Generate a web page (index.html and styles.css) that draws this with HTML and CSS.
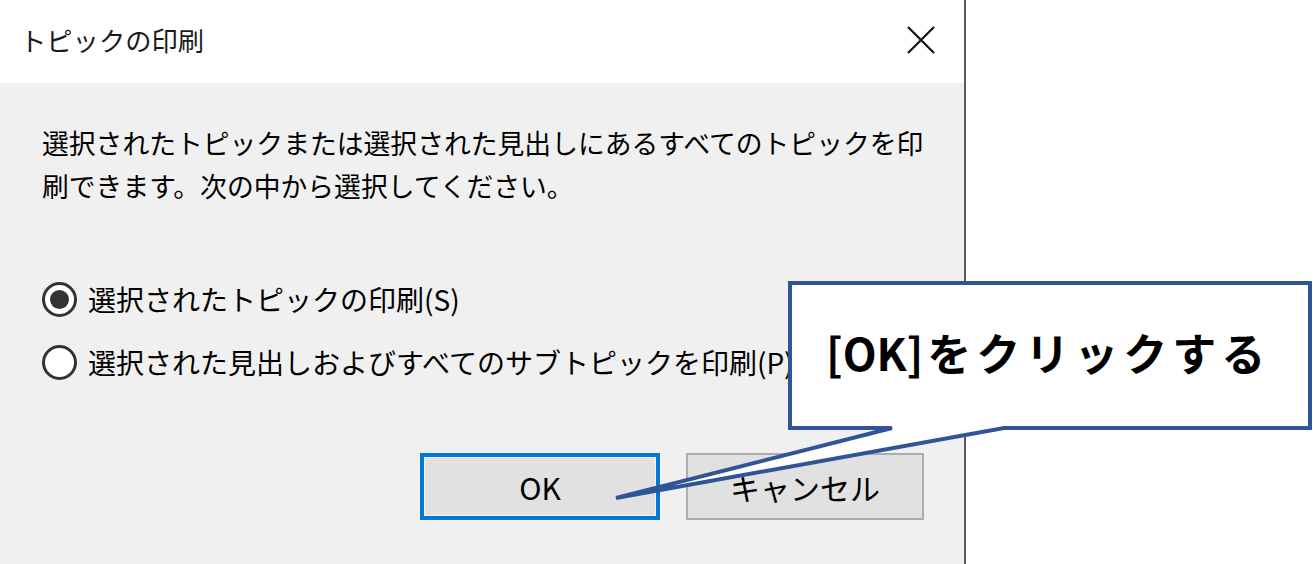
FILE: index.html
```html
<!DOCTYPE html>
<html lang="ja">

<head>
    <meta charset="UTF-8">
    <meta name="viewport" content="width=device-width, initial-scale=1.0">
    <title>トピックの印刷</title>

    <link rel="stylesheet" href="styles.css">
</head>

<body>
    <div class="page">
        <div class="dialog">
            <div class="titlebar">
                <span class="title">トピックの印刷</span>
                <svg class="close" width="30" height="30" viewBox="0 0 30 30">
                    <path d="M2 2 L28 28 M28 2 L2 28" stroke="#111" stroke-width="2.2" fill="none" />
                </svg>
            </div>
            <div class="content">
                <p class="message">選択されたトピックまたは選択された見出しにあるすべてのトピックを印刷できます。次の中から選択してください。</p>
                <div class="options">
                    <label class="option">
                        <span class="radio checked"></span>
                        <span>選択されたトピックの印刷(S)</span>
                    </label>
                    <label class="option">
                        <span class="radio"></span>
                        <span>選択された見出しおよびすべてのサブトピックを印刷(P)</span>
                    </label>
                </div>
                <div class="buttons">
                    <div class="btn btn-default">OK</div>
                    <div class="btn">キャンセル</div>
                </div>
            </div>
        </div>

        <!-- 吹き出し -->
        <svg class="callout-shape" width="1313" height="564" viewBox="0 0 1313 564">
            <path d="M790 283 H1310 V428 H1004 L616 498 L892 428 H790 Z" fill="#fff" stroke="#2f5597" stroke-width="4" stroke-linejoin="miter" />
        </svg>
        <div class="callout-text">[OK]<span class="kana">をクリックする</span></div>
    </div>
</body>

</html>
```

FILE: styles.css
```css
* {
    box-sizing: border-box;
}

body {
    margin: 0;
    background-color: #fff;
    font-family: "Noto Sans CJK JP", "Noto Sans", sans-serif;
    color: #000;
}

.page {
    position: relative;
    width: 1313px;
    height: 564px;
    overflow: hidden;
}

.dialog {
    width: 966px;
    height: 564px;
    border-right: 2px solid #5a5a5a;
    display: flex;
    flex-direction: column;
}

.titlebar {
    height: 83px;
    flex-shrink: 0;
    background-color: #fff;
    display: flex;
    align-items: center;
    justify-content: space-between;
    padding: 0 28px 4px 20px;
}

.title {
    font-size: 26.3px;
    color: #1a1a1a;
}

.close {
    display: block;
}

.content {
    flex: 1;
    background-color: #f0f0f0;
    padding: 38px 40px 0 42px;
}

.message {
    margin: 0;
    font-size: 26.8px;
    line-height: 43px;
    width: 900px;
}

.options {
    margin-top: 75px;
    display: flex;
    flex-direction: column;
    gap: 28px;
}

.option {
    display: flex;
    align-items: center;
    font-size: 28px;
    line-height: 35px;
    white-space: nowrap;
}

.radio {
    width: 35px;
    height: 35px;
    border: 3px solid #333;
    border-radius: 50%;
    background-color: #fff;
    margin-right: 11px;
    display: flex;
    align-items: center;
    justify-content: center;
    flex-shrink: 0;
}

.radio.checked::after {
    content: "";
    width: 19px;
    height: 19px;
    border-radius: 50%;
    background-color: #333;
}

.buttons {
    margin-top: 73px;
    display: flex;
    justify-content: flex-end;
    gap: 26px;
}

.btn {
    width: 238px;
    height: 67px;
    background-color: #e1e1e1;
    border: 2px solid #adadad;
    font-size: 30px;
    display: flex;
    align-items: center;
    justify-content: center;
    flex-shrink: 0;
}

.btn-default {
    border: 4px solid #0078d7;
    box-shadow: inset 0 0 0 1px #f4f4f4;
    width: 240px;
}

.callout-shape {
    position: absolute;
    top: 0;
    left: 0;
}

.callout-text {
    position: absolute;
    left: 826px;
    top: 322px;
    font-size: 44px;
    font-weight: 700;
    line-height: 60px;
    white-space: nowrap;
}

.kana {
    margin-left: 4px;
    letter-spacing: 5px;
}
```
